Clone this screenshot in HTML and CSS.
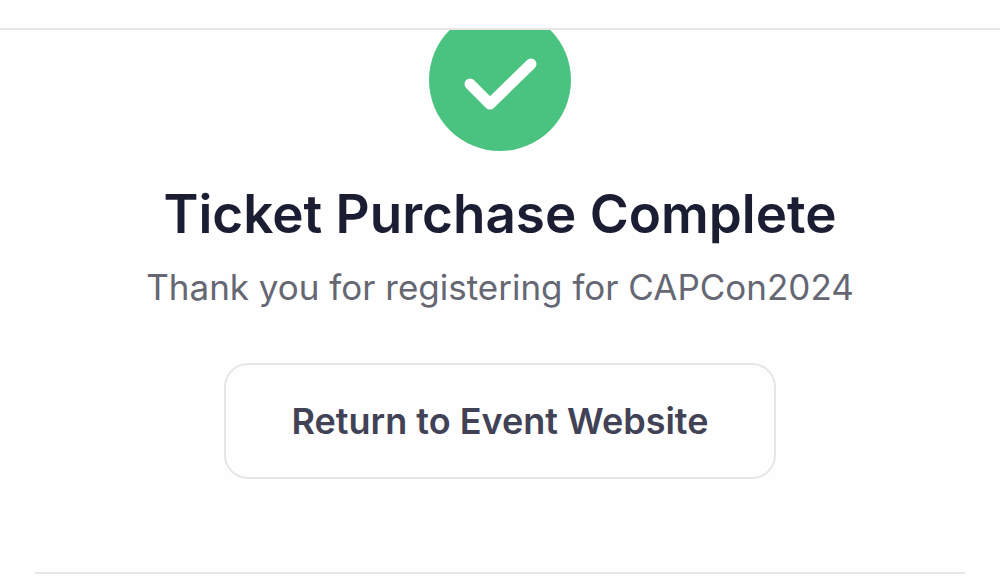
FILE: index.html
```html
<!DOCTYPE html>
<html lang="en">
<head>
<meta charset="UTF-8">
<meta name="viewport" content="width=device-width, initial-scale=1.0">
<title>Ticket Purchase Complete</title>
<link rel="stylesheet" href="styles.css">
</head>
<body>
<header class="topbar"></header>
<main class="content">
  <section class="confirmation">
    <svg class="success-icon" viewBox="0 0 142 142" aria-hidden="true">
      <circle cx="71" cy="71" r="71" fill="#4ac381"/>
      <path d="M41 75 L61 95 L102 55" fill="none" stroke="#fff" stroke-width="11" stroke-linecap="round" stroke-linejoin="round"/>
    </svg>
    <h1 class="title">Ticket Purchase Complete</h1>
    <p class="subtitle">Thank you for registering for CAPCon2024</p>
    <a class="return-button" href="#">Return to Event Website</a>
  </section>
  <hr class="divider">
</main>
</body>
</html>
```

FILE: styles.css
```css
* {
  box-sizing: border-box;
}
body {
  margin: 0;
  font-family: Inter, "Liberation Sans", sans-serif;
  background-color: #fefefe;
}
.topbar {
  height: 30px;
  border-bottom: 2px solid #e6e6e6;
}
.content {
  overflow: hidden;
  padding: 0 35px;
}
.confirmation {
  display: flex;
  flex-direction: column;
  align-items: center;
  text-align: center;
}
/* the icon is partly scrolled under the top bar */
.success-icon {
  width: 142px;
  height: 142px;
  margin-top: -21px;
}
.title {
  margin: 29px 0 0;
  font-size: 53px;
  font-weight: 600;
  line-height: 68px;
  color: #1b1d33;
}
.subtitle {
  margin: 17px 0 0;
  font-size: 35px;
  line-height: 44px;
  color: #656773;
}
.return-button {
  margin-top: 54px;
  padding: 34px 65px;
  border: 2px solid #e6e6e6;
  border-radius: 24px;
  font-size: 36px;
  font-weight: 600;
  line-height: 44px;
  color: #414255;
  text-decoration: none;
}
.divider {
  margin: 93px 0 0;
  border: 0;
  border-top: 2px solid #e6e6e6;
}
```
